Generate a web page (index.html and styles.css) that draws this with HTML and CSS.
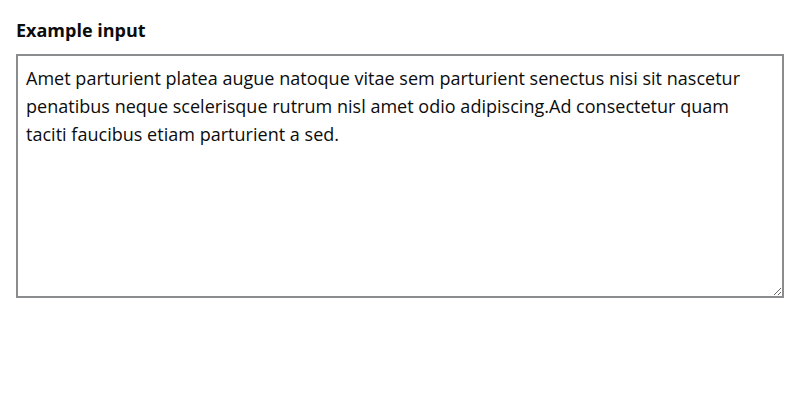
FILE: index.html
```html
<!DOCTYPE html>
<html>
<head>
<meta charset="utf-8">
<link rel="stylesheet" href="styles.css">
</head>
<body>
<div class="field">
  <label class="label" for="ex">Example input</label>
  <textarea id="ex" class="input">Amet parturient platea augue natoque vitae sem parturient senectus nisi sit nascetur penatibus neque scelerisque rutrum nisl amet odio adipiscing.Ad consectetur quam taciti faucibus etiam parturient a sed.</textarea>
</div>
</body>
</html>
```

FILE: styles.css
```css
body {
  margin: 0;
  padding: 16px;
  font-family: "Open Sans", sans-serif;
  color: #111;
}
.field {
  display: flex;
  flex-direction: column;
}
.label {
  font-weight: 700;
  font-size: 18px;
  line-height: 28px;
  margin-bottom: 10px;
  color: #0b0c0c;
}
.input {
  box-sizing: border-box;
  width: 768px;
  height: 244px;
  border: 2px solid #8a8c8e;
  padding: 8px 30px 8px 8px;
  margin: 0;
  font-family: "Open Sans", sans-serif;
  font-size: 18px;
  letter-spacing: 0.02px;
  line-height: 28px;
  color: #0b0c0c;
  resize: vertical;
}
```
